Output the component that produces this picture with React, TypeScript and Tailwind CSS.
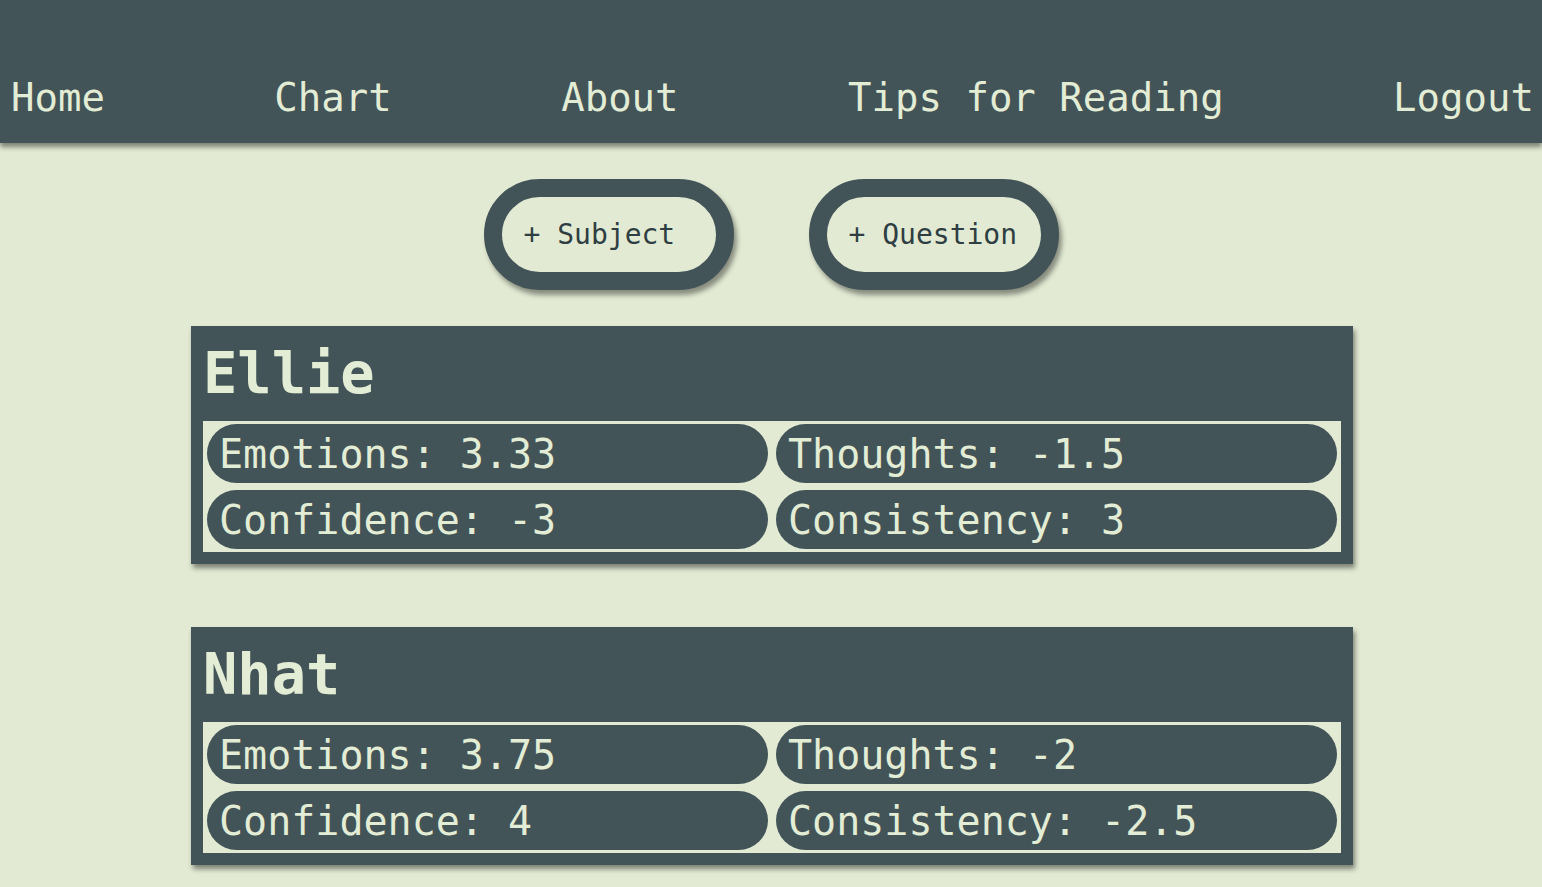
const navLinks = ["Home", "Chart", "About", "Tips for Reading", "Logout"];

type Subject = {
  name: string;
  emotions: string;
  thoughts: string;
  confidence: string;
  consistency: string;
};

const subjects: Subject[] = [
  { name: "Ellie", emotions: "3.33", thoughts: "-1.5", confidence: "-3", consistency: "3" },
  { name: "Nhat", emotions: "3.75", thoughts: "-2", confidence: "4", consistency: "-2.5" },
];

const mono = "font-['DejaVu_Sans_Mono','Liberation_Mono',monospace]";

function Stat({ label, value }: { label: string; value: string }) {
  return (
    <div className="h-[59px] rounded-full bg-[#425458] flex items-center pl-[12px]">
      <span className="text-[40px] leading-none text-[#e3ecd4] whitespace-pre">
        {label}: {value}
      </span>
    </div>
  );
}

function SubjectCard({ s }: { s: Subject }) {
  return (
    <div className="w-[1162px] mx-auto translate-x-[1px] bg-[#425458] px-[12px] pb-[12px] shadow-[2px_4px_5px_rgba(0,0,0,0.45)]">
      <div className="h-[95px] flex items-center">
        <h2 className="text-[57px] font-bold leading-none text-[#e3ecd4]">{s.name}</h2>
      </div>
      <div className="bg-[#e2ead3] px-[4px] pt-[3px] pb-[3px] grid grid-cols-2 gap-x-[8px] gap-y-[7px]">
        <Stat label="Emotions" value={s.emotions} />
        <Stat label="Thoughts" value={s.thoughts} />
        <Stat label="Confidence" value={s.confidence} />
        <Stat label="Consistency" value={s.consistency} />
      </div>
    </div>
  );
}

function AddButton({ label }: { label: string }) {
  return (
    <button className="w-[250px] h-[111px] rounded-full border-[18px] border-[#425458] bg-[#e2ead3] flex items-center pl-[22px] shadow-[3px_5px_5px_rgba(0,0,0,0.4)]">
      <span className="text-[28px] leading-none text-[#2f3e42] whitespace-pre">+ {label}</span>
    </button>
  );
}

export default function App() {
  return (
    <div className={`min-h-screen bg-[#e2ead3] ${mono} pb-[40px]`}>
      <nav className="h-[143px] bg-[#425458] flex justify-between pl-[11px] pr-[8px] pt-[69px] shadow-[0_4px_5px_rgba(0,0,0,0.45)] relative z-10">
        {navLinks.map((l) => (
          <a key={l} className="text-[39px] leading-normal text-[#e3ecd4] whitespace-pre h-fit">
            {l}
          </a>
        ))}
      </nav>

      <div className="flex justify-center gap-[75px] mt-[36px]">
        <AddButton label="Subject" />
        <AddButton label="Question" />
      </div>

      <div className="flex flex-col gap-[63px] mt-[36px]">
        {subjects.map((s) => (
          <SubjectCard key={s.name} s={s} />
        ))}
      </div>
    </div>
  );
}
